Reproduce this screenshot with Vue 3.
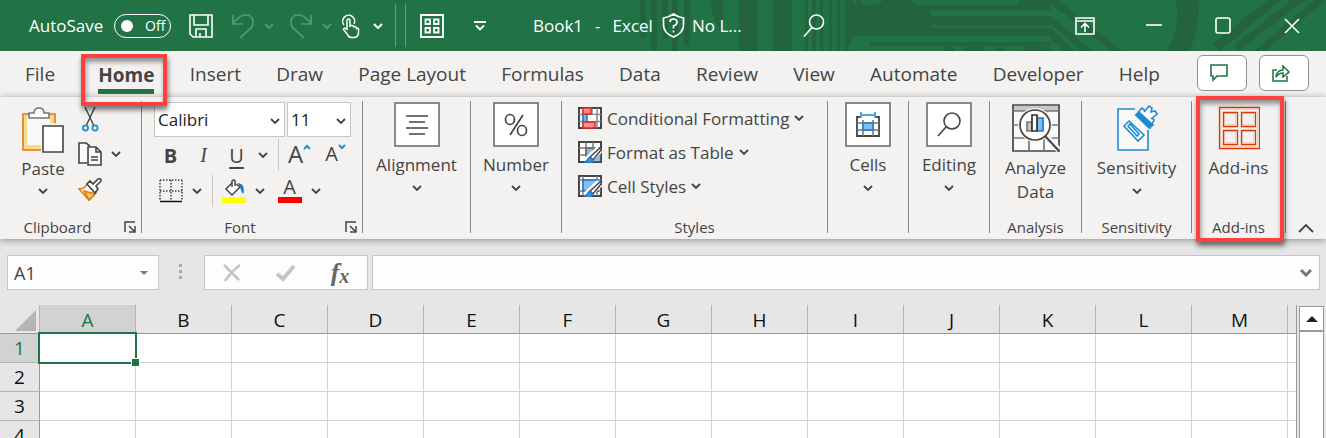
<script setup>
import { ref } from 'vue'

const tabs = ['File', 'Home', 'Insert', 'Draw', 'Page Layout', 'Formulas', 'Data', 'Review', 'View', 'Automate', 'Developer', 'Help']
const activeTab = ref('Home')
const autoSave = ref(false)
const font = ref('Calibri')
const size = ref('11')
const cellName = ref('A1')
const formula = ref('')
const columns = 'ABCDEFGHIJKLM'.split('')
const rows = [1, 2, 3, 4]
</script>

<template>
  <div class="window">
    <header class="titlebar">
      <svg class="pattern" width="700" height="51" viewBox="626 0 700 51" fill="#23633f" aria-hidden="true">
        <path d="M640 0h6v38h-6zM651 0h6v50h-6zM662 0h6v38h-6zM672 0h6v51h-6zM684 0h6v46h-6zM710 0h13v35q-11-14-13-35zM739 0h19v51h-19zM773 0h19v51h-19zM805 0h3v51h-3zM812 0h4v51h-4zM820 0h3v51h-3zM829 0h3v51h-3zM837 0h3v51h-3zM845 0h8v40l-4 5v6h-4zM856 0h5v5h-5z" />
        <path d="M853 5h198v5h-120v6h120v9h-120v3h120v8H853zM878 5q3-5 9-5h17q8 0 11 5zM870 42h181v4H870zM944 47h10v4h-10zM963 47h22v4h-22zM995 47h10v4h-10zM1018 0h28l6 5h-34zM1023 47h24l5 4h-29z" />
        <path d="M1046 0h12l64 51h-10zM1051 16l42 35h-12l-30-27zM1051 28l24 23h-11l-13-11zM1176 0h22q3 28-9 51h-22q14-23 9-51zM1268 0h13l-61 51-8-7zM1291 0h14l-67 51-3-7zM1314 0h12l-60 51h-12z" />
      </svg>
      <label class="autosave">
        <span>AutoSave</span>
        <input v-model="autoSave" type="checkbox" role="switch" />
        <span class="toggle"><i></i>{{ autoSave ? 'On' : 'Off' }}</span>
      </label>
      <button class="tb" aria-label="Save">
        <svg width="24" height="24" fill="none" stroke="#fff" stroke-width="1.6"><path d="M1 1h22v22H4l-3-3zM5 1v10h14V1M7 23v-8h10v8M11 19v4" /></svg>
      </button>
      <div class="pair undo">
        <button class="tb" aria-label="Undo"><svg class="dim" width="24" height="26" fill="none" stroke="#fff" stroke-width="1.7"><path d="M2 2v9h10M2 11C6 5 10 2 15 2c7 0 9 8 5 13L9 25" /></svg></button>
        <button class="drop" aria-label="Undo list"><svg class="dim" width="10" height="6" fill="none" stroke="#fff" stroke-width="1.8"><path d="M1 1l4 4 4-4" /></svg></button>
      </div>
      <div class="pair">
        <button class="tb" aria-label="Redo"><svg class="dim" width="24" height="26" fill="none" stroke="#fff" stroke-width="1.7"><path d="M22 2v9H12M22 11C18 5 14 2 9 2 2 2 0 10 4 15l11 10" /></svg></button>
        <button class="drop" aria-label="Redo list"><svg class="dim" width="10" height="6" fill="none" stroke="#fff" stroke-width="1.8"><path d="M1 1l4 4 4-4" /></svg></button>
      </div>
      <div class="pair touch">
        <button class="tb" aria-label="Touch mode">
          <svg width="20" height="26" fill="none" stroke="#fff" stroke-width="1.5"><path d="M3 12a6 6 0 1 1 10-1M6 17V8q0-2 1.500-2T9 8v6q0-2 2-1.500t1.500 2q0-1.500 1.500-1t1.500 2q2-1 2 1v3q0 5-5 5h-2q-3 0-4-3l-4-5q0-2 3-1z" /></svg>
        </button>
        <button class="drop" aria-label="Touch mode options"><svg width="10" height="6" fill="none" stroke="#fff" stroke-width="2"><path d="M1 1l4 4 4-4" /></svg></button>
      </div>
      <span class="rules"></span>
      <button class="tb wide" aria-label="Add-ins">
        <svg width="24" height="24" fill="none" stroke="#fff" stroke-width="1.8"><path d="M1 1h22v22H1zM5.500 5.500h4.500v4.500H5.500zM14 5.500h4.500v4.500H14zM5.500 14h4.500v4.500H5.500zM14 14h4.500v4.500H14z" /></svg>
      </button>
      <button class="tb" aria-label="Customize toolbar">
        <svg width="12" height="10" fill="none" stroke="#fff" stroke-width="1.8"><path d="M0 1h12M2 4.500l4 4 4-4" /></svg>
      </button>
      <div class="doc"><span>Book1</span><span>-</span><span>Excel</span></div>
      <button class="label-btn">
        <svg width="23" height="25" fill="none" stroke="#fff" stroke-width="1.7"><path d="M11.500 1q4 3 10 4v7q0 8-10 12Q1.500 20 1.500 12V5q6-1 10-4zM8 9q0-3 3.500-3T15 9t-3.500 4v2.500M11.500 17.500v2" /></svg>
        <span>No L...</span>
      </button>
      <button class="tb search" aria-label="Search">
        <svg width="22" height="24" fill="none" stroke="#fff" stroke-width="1.6"><circle cx="13.500" cy="8" r="7" /><path d="M9 13.500L1 22.500" /></svg>
      </button>
      <div class="controls">
        <button aria-label="Ribbon display options"><svg width="20" height="18" fill="none" stroke="#fff" stroke-width="1.6"><path d="M1 1h18v16H1zM1 4h18M10 15V7M6 10.500L10 6.500l4 4" /></svg></button>
        <button aria-label="Minimize"><svg width="16" height="18" stroke="#fff" stroke-width="1.6"><path d="M0 8h16" /></svg></button>
        <button aria-label="Maximize"><svg width="16" height="18" fill="none" stroke="#fff" stroke-width="1.6"><rect x="1" y="1" width="14" height="15" rx="2" /></svg></button>
        <button aria-label="Close"><svg width="16" height="16" stroke="#fff" stroke-width="1.6"><path d="M1 1l14 14M15 1L1 15" /></svg></button>
      </div>
    </header>

    <div class="tabbar">
      <nav>
        <button v-for="t in tabs" :key="t" :class="{ active: t === activeTab }" @click="activeTab = t">
          <span>{{ t }}</span><i v-if="t === 'Home'" class="callout callout-tab"></i>
        </button>
      </nav>
      <div class="actions">
        <button aria-label="Comments"><svg width="18" height="18" fill="none" stroke="#217346" stroke-width="1.6"><path d="M1 1h16v11H7l-4 4v-4H1z" /></svg></button>
        <button aria-label="Share"><svg width="18" height="18" fill="none" stroke="#217346" stroke-width="1.5"><path d="M5 6H1v11h14v-5M4 13q1-7 7-7V2l6 6-6 5V9q-4 0-7 4z" /></svg></button>
      </div>
    </div>

    <section class="ribbon">
      <div class="group">
        <div class="body clip">
          <button class="big paste">
            <svg width="44" height="48" fill="none" stroke-width="1.6">
              <path d="M2 8h32v36H2z" fill="#f8d990" stroke="#e07a14" /><path d="M6 10h23v29H6z" fill="#fafafa" />
              <path d="M8 12V7h5q0-5 5-5t5 5h5v5z" fill="#fff" stroke="#777" /><path d="M20 17h24v31H20z" fill="#f3f2f1" /><path d="M22 20h20v26H22z" fill="#fff" stroke="#444" />
            </svg>
            <span>Paste</span>
            <svg class="chev" width="10" height="6"><path d="M1 1l4 4 4-4" /></svg>
          </button>
          <div class="stack">
            <button aria-label="Cut"><svg width="24" height="26" fill="none" stroke="#444" stroke-width="1.400"><path d="M7 1l9 19M17 1L8 20" /><g stroke="#1e8bd0" stroke-width="1.700"><circle cx="7.500" cy="22" r="2.600" /><circle cx="17" cy="22" r="2.600" /></g></svg></button>
            <div class="inline">
              <button aria-label="Copy"><svg width="24" height="24" fill="#fafafa" stroke="#444" stroke-width="1.600"><path d="M9 21H1V1h7l4 3" /><path d="M10 5h8l5 5v13H10zM18 5v5h5M13 15h7M13 18h7" /></svg></button>
              <button aria-label="Copy options"><svg class="chev" width="10" height="6"><path d="M1 1l4 4 4-4" /></svg></button>
            </div>
            <button aria-label="Format painter"><svg width="24" height="24" fill="#fff" stroke-width="1.600"><path d="M1 12q6 0 8-5l9 9-7 7z" stroke="#e07a14" /><path d="M6 14l11 3-6 6z" fill="#f8c76b" stroke="#e07a14" /><path d="M9 7l3-3 3 3 5-5q3-1 3 2l-5 5 2 3-3 4z" stroke="#444" /></svg></button>
          </div>
        </div>
        <footer>Clipboard<button class="launch" aria-label="Clipboard settings"><svg width="12" height="12"><path d="M1 11V1h10M5 5l6 6M11 5v6H5" /></svg></button></footer>
      </div>

      <div class="group">
        <div class="body fontbody">
          <div class="line fields">
            <label class="select family"><select v-model="font" aria-label="Font"><option>Calibri</option><option>Arial</option></select><svg class="chev" width="10" height="6"><path d="M1 1l4 4 4-4" /></svg></label>
            <label class="select size"><select v-model="size" aria-label="Font size"><option>11</option><option>12</option></select><svg class="chev" width="10" height="6"><path d="M1 1l4 4 4-4" /></svg></label>
          </div>
          <div class="line">
            <button class="w b">B</button><button class="w i">I</button><button class="w u">U</button>
            <button class="n" aria-label="Underline options"><svg class="chev" width="10" height="6"><path d="M1 1l4 4 4-4" /></svg></button>
            <span class="vr"></span>
            <button class="w grow" aria-label="Increase font size">A<svg width="8" height="6"><path d="M1 5l3-3 3 3" /></svg></button>
            <button class="w grow small" aria-label="Decrease font size">A<svg width="8" height="6"><path d="M1 1l3 3 3-3" /></svg></button>
          </div>
          <div class="line">
            <button class="w" aria-label="Borders"><svg width="24" height="24" fill="none" stroke="#444" stroke-width="1.500"><path d="M1 1h22M1 12h22M1 1v20M12 1v20M23 1v20" stroke-dasharray="1.500 1.500" /><path d="M1 22.500h22" stroke="#111" /></svg></button>
            <button class="n" aria-label="Border options"><svg class="chev" width="10" height="6"><path d="M1 1l4 4 4-4" /></svg></button>
            <span class="vr"></span>
            <button class="w" aria-label="Fill color"><svg width="24" height="24" fill="none" stroke="#444" stroke-width="1.500"><path d="M10 4L4 10l6 6 8-8-4-3" fill="#fff" /><path d="M10 8V2q2-2 3 0v5" /><path d="M17 5q5 1 4 9l-2-5z" fill="#1e78c8" stroke="#1e78c8" /><path d="M0 21h24" stroke="#ff0" stroke-width="6" /></svg></button>
            <button class="n" aria-label="Fill color options"><svg class="chev" width="10" height="6"><path d="M1 1l4 4 4-4" /></svg></button>
            <button class="w color" aria-label="Font color"><span>A</span></button>
            <button class="n" aria-label="Font color options"><svg class="chev" width="10" height="6"><path d="M1 1l4 4 4-4" /></svg></button>
          </div>
        </div>
        <footer>Font<button class="launch" aria-label="Font settings"><svg width="12" height="12"><path d="M1 11V1h10M5 5l6 6M11 5v6H5" /></svg></button></footer>
      </div>

      <div class="group">
        <button class="big boxed"><span class="box"><svg width="24" height="24" fill="none" stroke="#444" stroke-width="1.600"><path d="M1 3h22M4 9h16M1 15h22M4 21h16" /></svg></span><span>Alignment</span><svg class="chev" width="10" height="6"><path d="M1 1l4 4 4-4" /></svg></button>
      </div>
      <div class="group">
        <button class="big boxed"><span class="box"><svg width="24" height="24" fill="none" stroke="#444" stroke-width="1.700"><ellipse cx="6" cy="6.500" rx="4.500" ry="5" /><ellipse cx="18" cy="17.500" rx="4.500" ry="5" /><path d="M19 2L6 22" /></svg></span><span>Number</span><svg class="chev" width="10" height="6"><path d="M1 1l4 4 4-4" /></svg></button>
      </div>

      <div class="group">
        <div class="body styles">
          <button><svg width="24" height="22" fill="none" stroke="#444" stroke-width="1.500"><path d="M1 1h22v20H1z" fill="#fff" stroke-width="2" /><path d="M5 1v20M19 1v20M1 7.500h22M1 14.500h22M14 1v20" stroke="#888" /><path d="M10 8h8v6h-8z" fill="#fff" stroke="none" /><path d="M5 7h4v8H5z" fill="#7ab8ea" stroke="#1e78c8" /><path d="M5 1h8v6H5zM5 15h12v6H5z" fill="#ff8a8a" stroke="#e02a20" /></svg><span>Conditional Formatting</span><svg class="chev" width="10" height="6"><path d="M1 1l4 4 4-4" /></svg></button>
          <button><svg width="24" height="22" fill="none" stroke="#444" stroke-width="1.500"><path d="M1 1h22v20H1z" fill="#fff" stroke-width="2" /><path d="M8 7h15v14H8z" fill="#83beec" /><path d="M8 1v20M15 1v20M1 7h22M1 14h22" stroke="#777" /><path d="M8 21l14-13" stroke="#fff" stroke-width="8" /><path d="M12 16l10-9q2 0 1 2l-8 10z" fill="#fff" /><path d="M6 21q3 0 4-3 1-2 3-1 3 2 0 4-3 2-7 0z" fill="#3c98dc" stroke="#1e78c8" /></svg><span>Format as Table</span><svg class="chev" width="10" height="6"><path d="M1 1l4 4 4-4" /></svg></button>
          <button><svg width="24" height="22" fill="none" stroke="#444" stroke-width="1.500"><path d="M1 1h22v20H1z" fill="#fff" stroke-width="2" /><path d="M5 1v20M1 5h22M19 1v20M1 16h22" stroke="#777" /><path d="M5 5h15v11H5z" fill="#83beec" stroke="#1e78c8" /><path d="M8 21l14-13" stroke="#fff" stroke-width="8" /><path d="M12 16l10-9q2 0 1 2l-8 10z" fill="#fff" /><path d="M6 21q3 0 4-3 1-2 3-1 3 2 0 4-3 2-7 0z" fill="#3c98dc" stroke="#1e78c8" /></svg><span>Cell Styles</span><svg class="chev" width="10" height="6"><path d="M1 1l4 4 4-4" /></svg></button>
        </div>
        <footer>Styles</footer>
      </div>

      <div class="group">
        <button class="big boxed"><span class="box"><svg width="24" height="26" fill="none" stroke="#444" stroke-width="1.500"><path d="M4 5H1v19h22V5h-3" stroke-width="1.800" /><path d="M1 11h22M1 18h22M7 8v16M17 8v16" stroke="#777" /><path d="M7 11h10v7H7z" fill="#83beec" stroke="#1e78c8" /><path d="M5 3h14M5 0v6M19 0v6" stroke="#1e8bd0" /></svg></span><span>Cells</span><svg class="chev" width="10" height="6"><path d="M1 1l4 4 4-4" /></svg></button>
      </div>
      <div class="group">
        <button class="big boxed"><span class="box"><svg width="24" height="26" fill="none" stroke="#444" stroke-width="1.600"><circle cx="15" cy="9" r="8" /><path d="M9 15L1 24" /></svg></span><span>Editing</span><svg class="chev" width="10" height="6"><path d="M1 1l4 4 4-4" /></svg></button>
      </div>
      <div class="group">
        <button class="big tall">
          <svg width="48" height="48" fill="none" stroke="#444" stroke-width="1.700"><path d="M1 1h46v46H1z" fill="#fafafa" /><path d="M2 2h44v5H2z" fill="#c8c6c4" stroke="none" /><path d="M1 7h46M1 21h46M1 34h46M17 7v40M32 7v40" stroke="#777" /><circle cx="23" cy="21" r="17" fill="#f3f2f1" stroke="none" /><path d="M33 31l14 15" stroke="#f3f2f1" stroke-width="6" /><circle cx="23" cy="21" r="15" fill="#fff" /><path d="M33 32l14 15" stroke-width="2" /><path d="M15 18h5v9h-5z" fill="#c8c6c4" stroke="#777" /><path d="M25 14h6v13h-6z" fill="#83beec" stroke="#1e78c8" /><path d="M20 11h5v16h-5z" fill="#fff" stroke="#333" /></svg>
          <span>Analyze<br />Data</span>
        </button>
        <footer>Analysis</footer>
      </div>
      <div class="group">
        <button class="big tall">
          <svg width="42" height="48" fill="none" stroke="#1e8bd0" stroke-width="1.600"><path d="M19 5H2v41h30V26" fill="#fafafa" /><path d="M8 22l5-5 15 14-6 6zM12 22l2-2 9 10-2 2z" fill="#fff" /><path d="M19 10l5-6 16 15-5 5z" fill="#fff" stroke="#f3f2f1" stroke-width="4" /><path d="M20 11l6-7 12 12-4 8z" fill="#fff" /><path d="M20 11l3-3 14 13-4 3z" fill="#1e8bd0" /><path d="M28 8l5-6 3 2-1 4 4-1 2 3-6 5" fill="#fff" /></svg>
          <span>Sensitivity</span><svg class="chev" width="10" height="6"><path d="M1 1l4 4 4-4" /></svg>
        </button>
        <footer>Sensitivity</footer>
      </div>
      <div class="group">
        <button class="big tall">
          <svg width="42" height="48" fill="none" stroke="#d83b01"><path d="M2.500 5.500h37v37h-37zM6.500 9.500h11v11h-11zM24.500 9.500h11v11h-11zM6.500 27.500h11v11h-11zM24.500 27.500h11v11h-11z" stroke="#f8cdbb" /><path d="M.5 3.500h41v41H.5zM4.500 7.500h15v15h-15zM22.500 7.500h15v15h-15zM4.500 25.500h15v15h-15zM22.500 25.500h15v15h-15z" stroke="none" /><path d="M1.500 3.500h40v41h-40zM5.500 8.500h14v14h-14zM23.500 8.500h14v14h-14zM5.500 26.500h14v14h-14zM23.500 26.500h14v14h-14z" stroke-width="1.300" /></svg>
          <span>Add-ins</span>
        </button>
        <footer>Add-ins</footer>
        <i class="callout callout-group"></i>
      </div>
      <div class="collapse"><button aria-label="Collapse ribbon"><svg class="chev" width="16" height="10"><path d="M1 9l7-7 7 7" /></svg></button></div>
    </section>

    <div class="formulabar">
      <div class="namebox"><input v-model="cellName" aria-label="Name box" /><button aria-label="Names"><svg width="8" height="4" fill="#777"><path d="M0 0h8L4 4z" /></svg></button></div>
      <span class="dots"></span>
      <div class="fx">
        <button aria-label="Cancel"><svg width="18" height="18" fill="none" stroke="#c4c4c4" stroke-width="2.500"><path d="M1 1l15 15M17 1Q8 8 2 17" /></svg></button>
        <button aria-label="Enter"><svg width="20" height="18" fill="none" stroke="#c4c4c4" stroke-width="4"><path d="M1 10l6 5L18 2" /></svg></button>
        <button class="fn" aria-label="Insert function">f<small>x</small></button>
      </div>
      <div class="formula"><input v-model="formula" aria-label="Formula" /><button aria-label="Expand formula bar"><svg width="12" height="9" fill="none" stroke="#777" stroke-width="3"><path d="M1 2l5 5 5-5" /></svg></button></div>
    </div>

    <main class="sheet">
      <div class="cells">
        <table>
          <colgroup><col class="head" /><col v-for="c in columns" :key="c" class="col" /><col /></colgroup>
          <thead>
            <tr><th class="corner"><svg width="21" height="21" fill="#b4b4b4"><path d="M21 0v21H0z" /></svg></th><th v-for="c in columns" :key="c" :class="{ on: c === 'A' }">{{ c }}</th><th></th></tr>
          </thead>
          <tbody>
            <tr v-for="r in rows" :key="r"><th :class="{ on: r === 1 }">{{ r }}</th><td v-for="c in columns" :key="c" :class="{ selected: r === 1 && c === 'A' }"></td><td></td></tr>
          </tbody>
        </table>
      </div>
      <div class="scroll"><button aria-label="Scroll up"><svg width="12" height="6" fill="#222"><path d="M0 6h12L6 0z" /></svg></button><div class="thumb"></div></div>
    </main>
  </div>
</template>

<style>
html, body { margin: 0; background: #e6e6e6; overflow: hidden; }
</style>

<style scoped>
.window { height: 100vh; display: flex; flex-direction: column; overflow: hidden; background: #e6e6e6; color: #444; font-family: "Open Sans", "Noto Sans", sans-serif; font-size: 17px; }
* { box-sizing: border-box; }
button, input, select { font: inherit; color: inherit; background: none; border: 0; padding: 0; margin: 0; outline: none; }
button { display: flex; align-items: center; justify-content: center; flex: none; white-space: nowrap; }
svg { display: block; flex: none; }
.chev { fill: none; stroke: #444; stroke-width: 1.8; }

.titlebar { position: relative; flex: none; height: 51px; display: flex; align-items: center; background: #217346; color: #fff; padding-left: 29px; }
.titlebar > * { position: relative; }
.titlebar .pattern { position: absolute; right: 0; top: 0; }
.dim { opacity: 0.25; }
.autosave { display: flex; align-items: center; width: 150px; line-height: 24px; }
.autosave > span:first-child { width: 85px; }
.autosave input { position: absolute; opacity: 0; }
.toggle { display: flex; align-items: center; gap: 12px; width: 57px; height: 24px; padding-left: 6px; border: 1px solid #fff; border-radius: 12px; font-size: 14px; }
.toggle i { width: 12px; height: 12px; border-radius: 50%; background: #fff; }
.tb { width: 44px; height: 40px; }
.pair { display: flex; }
.undo { margin-right: 6px; }
.pair .tb { width: 40px; }
.drop { width: 12px; }
.touch .tb { width: 36px; margin-right: 3px; }
.rules { width: 11px; height: 43px; margin-left: 11px; border: solid #5fa37d; border-width: 0 1px; }
.tb.wide { width: 52px; }
.doc { display: flex; gap: 12px; margin-left: 31px; width: 129px; }
.label-btn { gap: 7px; }
.search { margin-left: 50px; }
.controls { display: flex; margin-left: auto; }
.controls button { width: 69px; height: 51px; }

.tabbar { flex: none; height: 46px; display: flex; background: #f3f2f1; padding: 0 17px 0 25px; }
nav { flex: 1; display: flex; justify-content: space-between; }
nav button { position: relative; height: 46px; font-size: 19px; }
nav button:first-child { margin-right: 8px; }
nav .active { font-weight: 700; }
nav .active span { border-bottom: 5px solid #217346; line-height: 28px; padding-top: 5px; margin-top: 2px; }
.actions { display: flex; gap: 12px; margin-left: 37px; padding-top: 4px; }
.actions button { width: 50px; height: 36px; padding-right: 6px; background: #fff; border: 1px solid #919191; border-radius: 6px; }
.callout { position: absolute; z-index: 2; border: 4px solid #fd4141; box-shadow: 1px 4px 5px rgba(0, 0, 0, 0.5), inset 1px 4px 5px rgba(0, 0, 0, 0.4); pointer-events: none; }
.callout-tab { inset: 3px -13px -9px -17px; }

.ribbon { flex: none; height: 142px; display: grid; grid-template-columns: 142px 221px 108px 91px 266px 81px 81px 92px 110px 94px 1fr; padding: 4px 0 6px; background: #f3f2f1; box-shadow: 0 1px 7px rgba(0, 0, 0, 0.4); }
.group { position: relative; display: flex; flex-direction: column; border-right: 1px solid #8a8886; }
.callout-group { inset: -5px 1px -9px 4px; }
footer { position: relative; margin-top: auto; text-align: center; font-size: 15px; line-height: 12px; }
.group:first-child footer { padding-right: 26px; }
.group:nth-child(2) footer { padding-right: 24px; }
.launch { position: absolute; right: 5px; top: 0; }
.launch svg { fill: none; stroke: #444; stroke-width: 1.5; }
.body { display: flex; }
.clip { padding-left: 21px; }
.big { flex-direction: column; justify-content: flex-start; line-height: 24px; }
.paste { width: 44px; padding-top: 5px; }
.paste span { margin: 3px 0 7px; }
.stack { display: flex; flex-direction: column; margin-left: 13px; }
.stack button { height: 35px; align-self: flex-start; }
.inline { display: flex; gap: 9px; }
.fontbody { flex-direction: column; padding-left: 12px; }
.line { display: flex; align-items: center; height: 36px; }
.fields { gap: 2px; }
.select { position: relative; height: 35px; background: #fff; border: 1px solid #c6c6c6; }
.family { width: 131px; }
.size { width: 64px; }
select { appearance: none; display: block; width: 100%; height: 33px; padding-left: 3px; color: #222; }
.select .chev { position: absolute; right: 4px; top: 15px; pointer-events: none; }
.w { width: 33px; height: 32px; font-size: 20px; }
.n { width: 20px; height: 32px; }
.b { font-weight: 700; }
.i { font-family: "Liberation Serif", serif; font-style: italic; }
.u { text-decoration: underline; text-underline-offset: 4px; }
.vr { width: 1px; height: 32px; margin: 0 4px 0 5px; background: #c8c6c4; }
.grow { font-size: 24px; align-items: flex-start; line-height: 30px; }
.grow svg { margin-top: 5px; fill: none; stroke: #1e8bd0; stroke-width: 2; }
.small { font-size: 20px; margin-left: 3px; }
.color { margin-left: 3px; }
.color span { width: 24px; height: 24px; line-height: 16px; border-bottom: 6px solid #f00; }
.boxed { padding-top: 1px; }
.box { width: 46px; height: 45px; display: grid; place-items: center; background: #fff; border: 2px solid #8a8886; margin-bottom: 6px; }
.boxed .chev { margin-top: 8px; }
.tall { padding-top: 3px; }
.tall > span { margin-top: 4px; }
.tall .chev { margin-top: 8px; }
.styles { flex-direction: column; align-items: flex-start; padding-left: 16px; }
.styles button { height: 34px; gap: 5px; }
.collapse { display: flex; align-items: flex-end; justify-content: center; }

.formulabar { flex: none; height: 66px; display: flex; padding: 16px 6px 15px 7px; color: #444; }
.namebox, .fx, .formula { display: flex; align-items: center; height: 35px; background: #fdfdfd; border: 1px solid #c6c6c6; }
.namebox { width: 152px; padding: 0 10px 0 6px; }
.namebox input, .formula input { flex: 1; min-width: 0; height: 30px; font-size: 18px; }
.dots { width: 3px; margin: 9px 22px 11px 20px; background: repeating-linear-gradient(#aaa 0 3px, transparent 3px 6px); }
.fx { width: 164px; }
.fx button { width: 54px; height: 33px; }
.fn { font-family: "Liberation Serif", serif; font-style: italic; font-weight: 700; font-size: 26px; line-height: 28px; color: #666; }
.fn small { font-size: 20px; padding-top: 6px; }
.formula { flex: 1; margin-left: 4px; padding: 0 7px; }

.sheet { flex: 1; min-height: 0; display: flex; }
.cells { flex: 1; min-width: 0; overflow: hidden; }
table { width: 100%; table-layout: fixed; border-collapse: separate; border-spacing: 0; border-right: 1px solid #999; color: #111; font-size: 19px; }
.head { width: 40px; }
.col { width: 96px; }
th { height: 29px; padding: 0; font-weight: 400; line-height: 24px; background: #e6e6e6; }
thead th { border-bottom: 1px solid #999; border-right: 1px solid #b4b4b4; padding-top: 2px; }
thead th:last-child { border-right: 0; }
tbody th { border-right: 1px solid #999; border-bottom: 1px solid #b4b4b4; }
th.on { background: #d2d2d2; color: #217346; }
.corner svg { margin: 0 0 0 15px; }
td { padding: 0; background: #fff; border: solid #d4d4d4; border-width: 0 1px 1px 0; }
td:last-child { border-right: 0; }
.selected { position: relative; z-index: 1; }
.selected::before { content: ""; position: absolute; inset: -2px; border: 2px solid #217346; }
.selected::after { content: ""; position: absolute; right: -4px; bottom: -4px; width: 7px; height: 7px; background: #217346; border: solid #fff; border-width: 1px 0 0 1px; }
.scroll { width: 29px; padding: 1px 2px 0; display: flex; flex-direction: column; }
.scroll button { width: 25px; height: 26px; background: #fff; border: 1px solid #999; border-bottom-width: 2px; }
.thumb { flex: 1; width: 25px; background: #fff; border: solid #999; border-width: 0 1px; }
</style>
